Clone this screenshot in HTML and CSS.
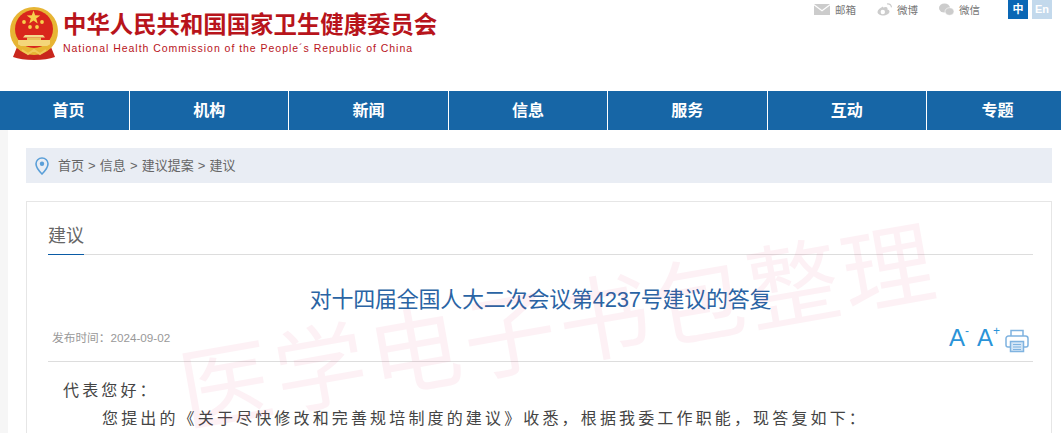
FILE: index.html
```html
<!DOCTYPE html>
<html lang="zh-CN">
<head>
    <meta charset="UTF-8">
    <title>对十四届全国人大二次会议第4237号建议的答复</title>
    <link rel="stylesheet" href="styles.css">
</head>
<body>
    <header class="top">
        <div class="logo">
            <svg class="emblem" width="50" height="53" viewBox="0 0 50 53">
                <path d="M8 40L4 50q8 3 21 3t21-3l-4-10z" fill="#c9271d"/>
                <circle cx="25" cy="24" r="24" fill="#e7b534"/>
                <circle cx="25" cy="22" r="19" fill="#d9261c"/>
                <polygon points="24.500,3.500 26.200,8.300 31.300,8.400 27.200,11.500 28.700,16.400 24.500,13.500 20.300,16.400 21.800,11.500 17.700,8.400 22.800,8.300" fill="#f7d04c"/>
                <circle cx="15" cy="15" r="1.900" fill="#f7d04c"/>
                <circle cx="33" cy="15" r="1.900" fill="#f7d04c"/>
                <circle cx="21" cy="20" r="1.900" fill="#f7d04c"/>
                <circle cx="28" cy="20" r="1.900" fill="#f7d04c"/>
                <path d="M16 28h18l2 2.500H14z" fill="#f3d98c"/>
                <path d="M18 30.500h14V33H18z" fill="#e8c25a"/>
                <path d="M9 33h32v6H9z" fill="#f4d67a"/>
                <path d="M4 33q8 9 21 9t21-9q-3 13-21 13T4 33z" fill="#e7b534"/>
                <path d="M13 43l6 4 6-4 6 4 6-4" fill="none" stroke="#f0c95a" stroke-width="2"/>
            </svg>
            <div class="logo-text">
                <div class="logo-cn">中华人民共和国国家卫生健康委员会</div>
                <div class="logo-en">National Health Commission of the People´s Republic of China</div>
            </div>
        </div>
        <div class="tools">
            <a class="tool">
                <svg width="16" height="11" viewBox="0 0 16 11"><path d="M0 0h16L8 6z" fill="#ccc"/><path d="M0 1.500v9.500h16V1.500L8 7.500z" fill="#ccc"/></svg>
                邮箱
            </a>
            <a class="tool">
                <svg width="15" height="13" viewBox="0 0 15 13"><path d="M6 3.500C3 4.800.5 7 .5 9c0 2.300 3 3.500 5.500 3.500 3.500 0 6.500-1.800 6.500-4 0-1.300-1.300-1.800-2.100-2 .6-1.500-.3-2.700-1.700-2.600-.9 0-1.700.3-2.700.6z" fill="#ccc"/><circle cx="5.800" cy="9" r="2.200" fill="#fff"/><path d="M10 1q3.800-.5 4.500 3.300" fill="none" stroke="#ccc" stroke-width="1.200"/></svg>
                微博
            </a>
            <a class="tool">
                <svg width="15" height="13" viewBox="0 0 15 13"><ellipse cx="5.500" cy="5" rx="5.500" ry="4.500" fill="#ccc"/><ellipse cx="10.500" cy="8.500" rx="4.500" ry="3.800" fill="#ccc" stroke="#fff" stroke-width=".6"/></svg>
                微信
            </a>
            <div class="langs">
                <span class="lang lang-on">中</span>
                <span class="lang lang-off">En</span>
            </div>
        </div>
    </header>

    <nav class="nav">
        <a>首页</a>
        <a>机构</a>
        <a>新闻</a>
        <a>信息</a>
        <a>服务</a>
        <a>互动</a>
        <a>专题</a>
    </nav>

    <main class="main">
        <div class="crumb">
            <svg width="14" height="18" viewBox="0 0 14 18"><path d="M7 1C3.600 1 1 3.600 1 6.800 1 11 7 17 7 17s6-6 6-10.200C13 3.600 10.400 1 7 1z" fill="none" stroke="#5a9fd8" stroke-width="1.600"/><circle cx="7" cy="6.800" r="2.200" fill="#5a9fd8"/></svg>
            <span>首页 &gt; 信息 &gt; 建议提案 &gt; 建议</span>
        </div>

        <section class="card">
            <div class="card-head"><span>建议</span></div>
            <h1 class="title">对十四届全国人大二次会议第4237号建议的答复</h1>
            <div class="meta">
                <span class="date">发布时间：2024-09-02</span>
                <div class="meta-tools">
                    <span class="font-btn font-small">A<sup>-</sup></span>
                    <span class="font-btn">A<sup>+</sup></span>
                    <svg width="24" height="24" viewBox="0 0 24 24" fill="none" stroke="#7fb3e0" stroke-width="1.500">
                        <path d="M6 7V1.500h12V7"/>
                        <path d="M5 18H3a2 2 0 0 1-2-2V9.500a2.500 2.500 0 0 1 2.500-2.500h17A2.500 2.500 0 0 1 23 9.500V16a2 2 0 0 1-2 2h-2"/>
                        <path d="M5.500 12.500h13v10h-13z" fill="#d4e6f6"/>
                        <path d="M8 15.500h8M8 18h8M8 20.500h8" stroke-width="1"/>
                    </svg>
                </div>
            </div>
            <div class="content">
                <p class="salute">代表您好：</p>
                <p>您提出的《关于尽快修改和完善规培制度的建议》收悉，根据我委工作职能，现答复如下：</p>
            </div>
            <div class="watermark">医学电子书包整理</div>
        </section>
    </main>
</body>
</html>
```

FILE: styles.css
```css
html, body {
    margin: 0;
    padding: 0;
    height: 433px;
    overflow: hidden;
}
body {
    font-family: "Liberation Sans", "Noto Sans CJK SC", sans-serif;
    background-color: #f6f6f6;
}
.top {
    height: 91px;
    background: white;
    display: flex;
    justify-content: space-between;
}
.logo {
    display: flex;
    padding: 7px 0 0 9px;
}
.emblem {
    margin-right: 4px;
}
.logo-cn {
    color: #b8141b;
    font-size: 23.400px;
    font-weight: bold;
    line-height: 26px;
    margin-top: 5px;
    white-space: nowrap;
}
.logo-en {
    color: #b8141b;
    font-size: 10.500px;
    letter-spacing: 0.970px;
    line-height: 14px;
    margin-top: 3px;
    white-space: nowrap;
}
.tools {
    display: flex;
    align-items: flex-start;
    padding: 1px 9px 0 0;
    font-size: 10.500px;
    color: #777;
}
.tool {
    display: flex;
    align-items: center;
    gap: 5px;
    height: 17px;
    margin-right: 21px;
}
.langs {
    display: flex;
    gap: 4px;
    margin-left: 7px;
    margin-top: -1px;
}
.lang {
    width: 20px;
    height: 19px;
    line-height: 19px;
    text-align: center;
    font-size: 11px;
    font-weight: bold;
    color: white;
}
.lang-on {
    background-color: #0a67b5;
}
.lang-off {
    background-color: #c3d9ec;
}
.nav {
    height: 39px;
    background-color: #1766a6;
    padding-left: 8px;
    display: grid;
    grid-template-columns: 121px repeat(5, 159.400px) 142px;
    overflow: hidden;
}
.nav a {
    color: white;
    font-size: 16px;
    font-weight: bold;
    line-height: 39px;
    text-align: center;
    border-left: 1px solid white;
}
.nav a:first-child {
    border-left: none;
}
.main {
    margin-left: 8px;
    background: white;
    padding: 18px 9px 0 18px;
    height: 285px;
    overflow: hidden;
}
.crumb {
    height: 35px;
    background-color: #e9edf4;
    display: flex;
    align-items: center;
    gap: 9px;
    padding-left: 9px;
    font-size: 13px;
    word-spacing: 0.500px;
    color: #666;
}
.crumb span {
    padding-bottom: 2px;
}
.card {
    position: relative;
    overflow: hidden;
    margin-top: 18px;
    border: 1px solid #e6e6e6;
    padding: 0 18px 0 21px;
    height: 300px;
}
.card-head {
    margin-top: 20px;
    border-bottom: 1px solid #ddd;
    height: 32px;
}
.card-head span {
    display: inline-block;
    height: 32px;
    line-height: 29px;
    font-size: 18px;
    color: #666;
    border-bottom: 1px solid #0a5ba6;
}
.title {
    margin: 30px 0 0;
    font-size: 22px;
    font-weight: normal;
    letter-spacing: -0.240px;
    line-height: 30px;
    text-align: center;
    color: #2a64a4;
}
.meta {
    display: flex;
    justify-content: space-between;
    align-items: flex-end;
    height: 46px;
    border-bottom: 1px solid #ddd;
}
.date {
    font-size: 11.700px;
    color: #999;
    padding: 0 0 16px 4px;
}
.meta-tools {
    display: flex;
    align-items: flex-end;
    gap: 5px;
    padding: 0 4px 8px 0;
}
.font-btn {
    color: #2a93d8;
    font-size: 24px;
    line-height: 24px;
    margin-bottom: 3px;
}
.font-small {
    margin-right: 3px;
}
.font-btn sup {
    font-size: 12px;
    line-height: 0;
    vertical-align: 11px;
}
.content {
    font-family: "Noto Sans CJK SC", sans-serif;
    font-size: 16px;
    color: #444;
    letter-spacing: 3.150px;
}
.content p {
    margin: 0;
    line-height: 28px;
    text-indent: 54px;
    white-space: nowrap;
}
.content .salute {
    margin-top: 13px;
    text-indent: 15px;
}
.watermark {
    position: absolute;
    left: 148px;
    top: 76px;
    font-size: 92px;
    line-height: 100px;
    color: #e0205f;
    opacity: 0.06;
    transform: rotate(-10deg);
    white-space: nowrap;
    letter-spacing: 4px;
}
```
